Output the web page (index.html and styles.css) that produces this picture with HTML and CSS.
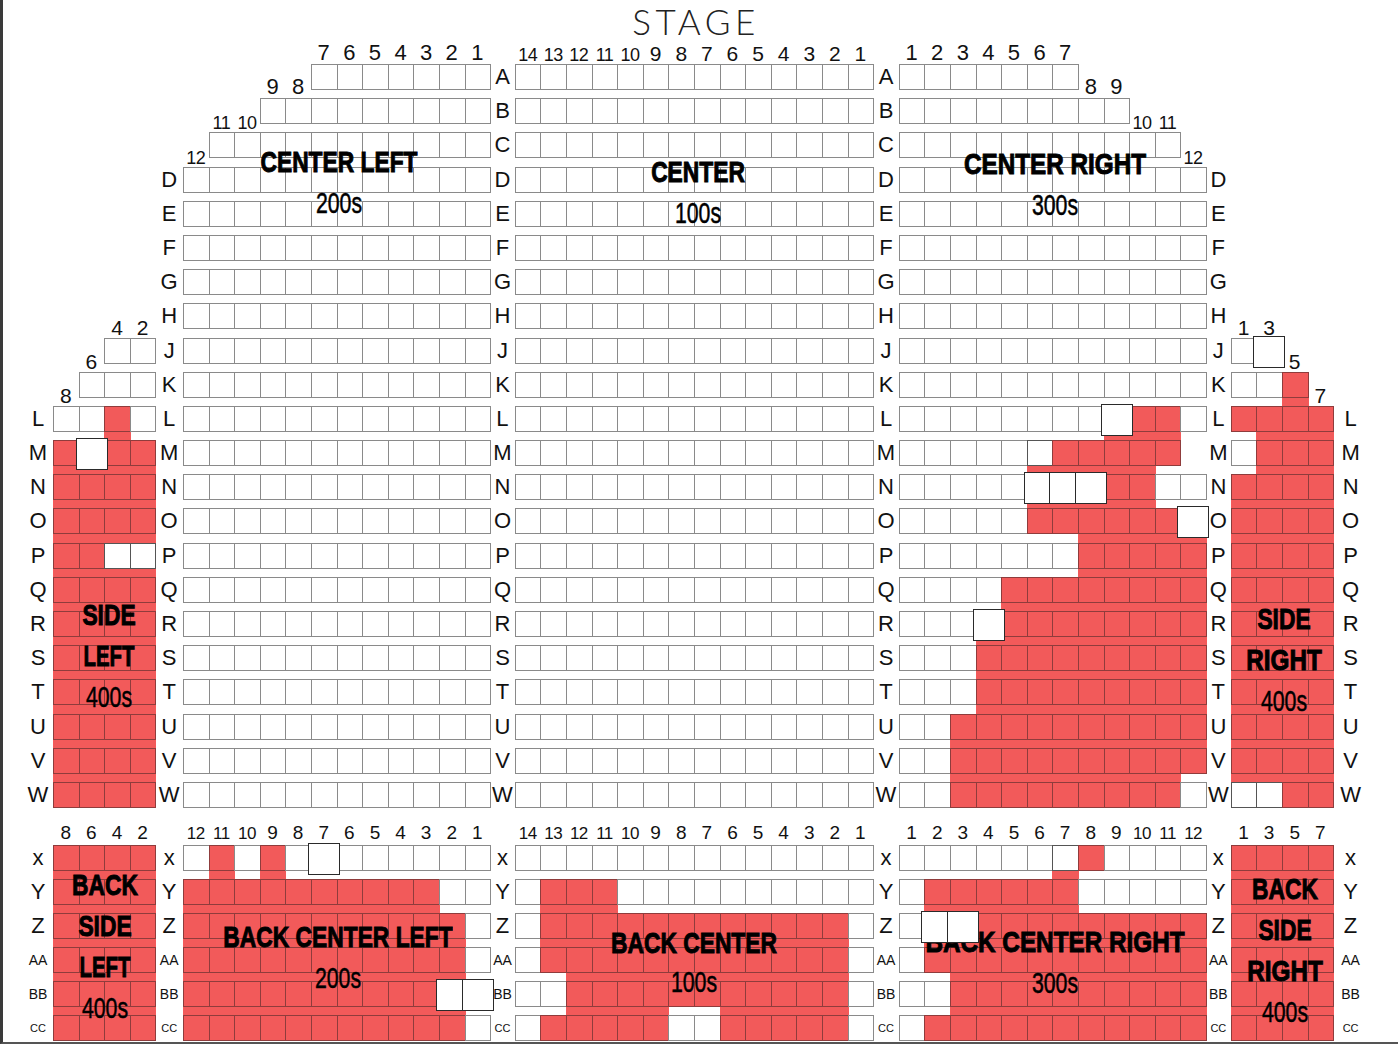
FILE: index.html
```html
<!DOCTYPE html>
<html lang="en">
<head>
<meta charset="utf-8">
<title>Seating chart</title>
<link rel="stylesheet" href="styles.css">
</head>
<body>
<div class="page">
  <div class="chart" id="chart">
    <div class="stage">STAGE</div>

    <div class="title t-cl"><div class="tb">CENTER LEFT</div><div class="tn">200s</div></div>
    <div class="title t-c"><div class="tb">CENTER</div><div class="tn">100s</div></div>
    <div class="title t-cr"><div class="tb sx-r">CENTER RIGHT</div><div class="tn">300s</div></div>
    <div class="title t-sl"><div class="tb">SIDE</div><div class="tb sx-l">LEFT</div><div class="tn">400s</div></div>
    <div class="title t-sr"><div class="tb">SIDE</div><div class="tb sx-r">RIGHT</div><div class="tn">400s</div></div>

    <div class="title t-bsl"><div class="tb">BACK</div><div class="tb">SIDE</div><div class="tb sx-l">LEFT</div><div class="tn">400s</div></div>
    <div class="title t-bcl"><div class="tb">BACK CENTER LEFT</div><div class="tn">200s</div></div>
    <div class="title t-bc"><div class="tb">BACK CENTER</div><div class="tn">100s</div></div>
    <div class="title t-bcr"><div class="tb sx-r">BACK CENTER RIGHT</div><div class="tn">300s</div></div>
    <div class="title t-bsr"><div class="tb">BACK</div><div class="tb">SIDE</div><div class="tb sx-r">RIGHT</div><div class="tn">400s</div></div>
  </div>
</div>
<script src="script.js"></script>
</body>
</html>
```
FILE: styles.css
```css
* { box-sizing: border-box; }
html, body { margin: 0; padding: 0; background: #fff; }
body {
  width: 1398px;
  height: 1044px;
  overflow: hidden;
  font-family: "Liberation Sans", Arial, sans-serif;
  color: #111;
}
.page {
  height: 1044px;
  border-left: 3px solid #3a3a3a;
  border-bottom: 2px solid #555;
  overflow: hidden;
}
.chart {
  position: relative;
  display: grid;
  margin-left: 20px;
  grid-template-columns: 30px repeat(4, 25.6px) 27.6px repeat(12, 25.6px) 24.8px repeat(14, 25.6px) 25.6px repeat(12, 25.6px) 24.8px repeat(4, 25.6px) 35px;
  grid-template-rows: 38px 26px repeat(22, 34.2px) 28.6px repeat(6, 34.1px);
}
.stage {
  grid-row: 1;
  grid-column: 20 / 34;
  justify-self: center;
  align-self: start;
  padding-left: 4px;
  font-family: Lato, "Open Sans", sans-serif;
  font-weight: 300;
  font-size: 35px;
  line-height: normal;
  letter-spacing: 4.5px;
  color: #222;
}

/* seats */
.seat {
  position: relative;
  width: calc(100% + 1px);
  height: 26px;
  align-self: start;
  justify-self: start;
  border: 1px solid #8a8a8a;
  background: #fff;
}
.seat.r { background: #f25a5a; border-color: #8f3c3c; }
.seat.o { border-color: #555; }
.seat.gap::after {
  content: "";
  position: absolute;
  left: -1px;
  right: -1px;
  top: calc(100% + 1px);
  height: 9px;
  background: #f25a5a;
}
.seat.hl::before {
  content: "";
  position: absolute;
  left: -4px;
  top: -3px;
  width: 30px;
  height: 30px;
  background: #fff;
  border: 1.5px solid #2a2a2a;
  z-index: 3;
}

/* row labels */
.rl {
  align-self: start;
  height: 26px;
  display: flex;
  align-items: center;
  justify-content: center;
  font-size: 22px;
  line-height: 1;
  color: #111;
}
.rl.s2 { font-size: 14px; }
.rl.s3 { font-size: 11px; }

/* seat numbers */
.num {
  align-self: end;
  justify-self: center;
  font-size: 21px;
  line-height: 1;
  white-space: nowrap;
  color: #111;
}
.num.big { font-size: 22px; }
.num.n2 { font-size: 18px; letter-spacing: -0.5px; }
.num.back { font-size: 19px; margin-bottom: 3px; }
.num.back.n2 { font-size: 17px; }

/* section titles (overlay) */
.title {
  position: absolute;
  transform: translateX(-50%);
  text-align: center;
  line-height: 41px;
  white-space: nowrap;
  z-index: 2;
  color: #000;
}
.tb {
  font-weight: 700;
  font-size: 30px;
  transform: scaleX(0.76);
  -webkit-text-stroke: 1px #000;
}
.tb.sx-r { transform: scaleX(0.81); }
.tb.sx-l { transform: scaleX(0.68); }
.tn {
  font-size: 30px;
  transform: scaleX(0.71);
  -webkit-text-stroke: 0.5px #000;
}
.t-cl { left: 315.5px; top: 140.6px; }
.t-c { left: 674.5px; top: 150.6px; }
.t-cr { left: 1031.5px; top: 142.6px; }
.t-sl { left: 85.5px; top: 593.6px; }
.t-sr { left: 1261px; top: 597.6px; }
.t-bsl { left: 81.5px; top: 863.6px; }
.t-bcl { left: 315px; top: 915.6px; }
.t-bc { left: 670.5px; top: 922.6px; line-height: 39px; }
.t-bcr { left: 1032px; top: 920.6px; }
.t-bsr { left: 1261.5px; top: 867.6px; }
```
FILE: script.js
```js
(function () {
  var chart = document.getElementById('chart');
  var TOP = ['A','B','C','D','E','F','G','H','J','K','L','M','N','O','P','Q','R','S','T','U','V','W'];
  var BACK = ['x','Y','Z','AA','BB','CC'];

  function rep(s, n) { var a = []; for (var i = 0; i < n; i++) a.push(s); return a; }
  function seq(a, b) { var r = []; if (a <= b) { for (var i = a; i <= b; i++) r.push(i); } else { for (var j = a; j >= b; j--) r.push(j); } return r; }
  var W12 = 'wwwwwwwwwwww';
  var W14 = 'wwwwwwwwwwwwww';

  var sections = [
    { col: 2, back: false, nums: [8,6,4,2], start: 8,
      rows: ['..ww','.www','wwrw','rhrr','rrrr','rrrr','rroo'].concat(rep('rrrr', 7)) },
    { col: 7, back: false, big: true, nums: seq(12, 1), start: 0,
      rows: ['.....wwwwwww','...wwwwwwwww','.wwwwwwwwwww'].concat(rep(W12, 19)) },
    { col: 20, back: false, nums: seq(14, 1), start: 0, rows: rep(W14, 22) },
    { col: 35, back: false, big: true, nums: seq(1, 12), start: 0,
      rows: ['wwwwwww.....','wwwwwwwww...','wwwwwwwwwww.'].concat(rep(W12, 7)).concat([
        'wwwwwwwwhrrw',
        'wwwwworrrrr.',
        'wwwwwhhhrrww',
        'wwwwwrrrrrrh',
        'wwwwwwwrrrrr',
        'wwwwrrrrrrrr',
        'wwwhrrrrrrrr',
        'wwwrrrrrrrrr',
        'wwwrrrrrrrrr',
        'wwrrrrrrrrrr',
        'wwrrrrrrrrrr',
        'wwrrrrrrrrrw'
      ]) },
    { col: 48, back: false, nums: [1,3,5,7], start: 8,
      rows: ['wH..','wwr.','rrrr','wrrr'].concat(rep('rrrr', 9)).concat(['oorr']) },

    { col: 2, back: true, nums: [8,6,4,2], start: 0, rows: rep('rrrr', 6) },
    { col: 7, back: true, nums: seq(12, 1), start: 0,
      rows: ['wrwrwHwwwwww','rrrrrrrrrrww','rrrrrrrrrrrw','rrrrrrrrrrrw','rrrrrrrrrrhh','rrrrrrrrrrrw'] },
    { col: 20, back: true, nums: seq(14, 1), start: 0,
      rows: [W14,'wrrrwwwwwwwwww','wrrrrrrrrrrrrw','wrrrrrrrrrrrrw','wwrrrrrrrrrrrw','wrrrrrwwrrrrrw'] },
    { col: 35, back: true, nums: seq(1, 12), start: 0,
      rows: ['wwwwwworwwww','wrrrrrrwwwww','whhrrrrrrrrr','wrrrrrrrrrrr','wwrrrrrrrrrr','wrrrrrrrrrrr'] },
    { col: 48, back: true, nums: [1,3,5,7], start: 0, rows: rep('rrrr', 6) }
  ];

  function el(cls, text, r, c) {
    var d = document.createElement('div');
    d.className = cls;
    if (text) d.textContent = text;
    d.style.gridRow = r;
    d.style.gridColumn = c;
    chart.appendChild(d);
    return d;
  }
  function isFill(ch) { return ch === 'r' || ch === 'h' || ch === 'o'; }

  sections.forEach(function (s) {
    var base = s.back ? 26 : 3;
    var n = s.nums.length;
    var first = rep(-1, n);
    s.rows.forEach(function (row, k) {
      var ri = s.start + k;
      var next = s.rows[k + 1];
      for (var j = 0; j < n; j++) {
        var ch = row.charAt(j);
        if (!ch || ch === '.') continue;
        if (first[j] < 0) first[j] = ri;
        var cls = 'seat';
        if (ch === 'r') cls += ' r';
        if (ch === 'h') cls += ' r hl';
        if (ch === 'H') cls += ' hl';
        if (ch === 'o') cls += ' o';
        if (isFill(ch) && next && isFill(next.charAt(j))) cls += ' gap';
        el(cls, '', base + ri, s.col + j);
      }
    });
    first.forEach(function (ri, j) {
      if (ri < 0) return;
      var num = String(s.nums[j]);
      var cls = 'num' + (s.back ? ' back' : '') + (num.length > 1 ? ' n2' : (s.big ? ' big' : ''));
      el(cls, num, base + ri - 1, s.col + j);
    });
  });

  var topLabels = [[1, 10], [6, 3], [19, 0], [34, 0], [47, 3], [52, 10]];
  topLabels.forEach(function (t) {
    for (var i = t[1]; i < TOP.length; i++) el('rl', TOP[i], 3 + i, t[0]);
  });
  [1, 6, 19, 34, 47, 52].forEach(function (c) {
    BACK.forEach(function (name, i) {
      var cls = 'rl' + (name === 'AA' || name === 'BB' ? ' s2' : '') + (name === 'CC' ? ' s3' : '');
      el(cls, name, 26 + i, c);
    });
  });
})();
```
